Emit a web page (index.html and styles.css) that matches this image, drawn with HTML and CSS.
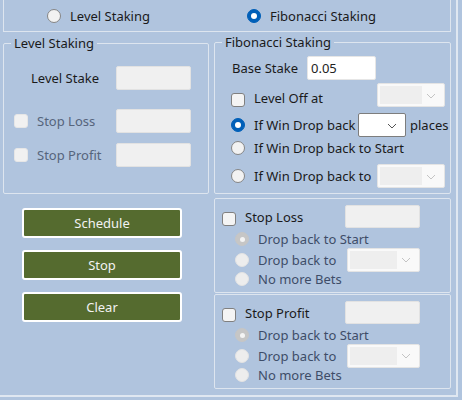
FILE: index.html
```html
<!DOCTYPE html>
<html lang="en">
<head>
<meta charset="utf-8">
<title>Staking</title>
<link rel="stylesheet" href="styles.css">
</head>
<body>
<div class="frame">
  <div class="mode">
    <label class="opt opt-level"><span class="radio"></span><span class="txt">Level Staking</span></label>
    <label class="opt"><span class="radio on"></span><span class="txt">Fibonacci Staking</span></label>
  </div>

  <div class="panels">
    <div class="col-left">
      <fieldset class="group level">
        <legend>Level Staking</legend>
        <div class="lrow lr1">
          <span class="lbl stake-lbl">Level Stake</span>
          <span class="tb"></span>
        </div>
        <div class="lrow lr2">
          <span class="chk dis"></span>
          <span class="lbl dim">Stop Loss</span>
          <span class="tb"></span>
        </div>
        <div class="lrow lr3">
          <span class="chk dis"></span>
          <span class="lbl dim">Stop Profit</span>
          <span class="tb"></span>
        </div>
      </fieldset>
      <div class="buttons">
        <button class="btn" type="button">Schedule</button>
        <button class="btn" type="button">Stop</button>
        <button class="btn" type="button">Clear</button>
      </div>
    </div>

    <div class="col-right">
      <fieldset class="group fib">
        <legend>Fibonacci Staking</legend>
        <div class="frow fa">
          <span class="lbl base-lbl">Base Stake</span>
          <span class="tb white">0.05</span>
        </div>
        <div class="frow fb">
          <span class="chk"></span>
          <span class="lbl">Level Off at</span>
          <span class="combo dis end"><span class="field"></span><svg class="chev" width="10" height="6" viewBox="0 0 10 6"><path d="M1 1L5 5L9 1" fill="none" stroke="#c4c4c4" stroke-width="1"/></svg></span>
        </div>
        <div class="frow fc">
          <span class="radio on"></span>
          <span class="lbl wide">If Win Drop back</span>
          <span class="combo small"><span class="field"></span><svg class="chev" width="10" height="6" viewBox="0 0 10 6"><path d="M1 1L5 5L9 1" fill="none" stroke="#555" stroke-width="1"/></svg></span>
          <span class="lbl places">places</span>
        </div>
        <div class="frow fd">
          <span class="radio"></span>
          <span class="lbl">If Win Drop back to Start</span>
        </div>
        <div class="frow fe">
          <span class="radio"></span>
          <span class="lbl">If Win Drop back to</span>
          <span class="combo dis end"><span class="field"></span><svg class="chev" width="10" height="6" viewBox="0 0 10 6"><path d="M1 1L5 5L9 1" fill="none" stroke="#c4c4c4" stroke-width="1"/></svg></span>
        </div>
      </fieldset>

      <div class="box">
        <div class="srow s1">
          <span class="chk"></span>
          <span class="lbl stop-lbl">Stop Loss</span>
          <span class="tb"></span>
        </div>
        <div class="srow s2">
          <span class="radio dis on"></span>
          <span class="lbl soft">Drop back to Start</span>
        </div>
        <div class="srow s3">
          <span class="radio dis"></span>
          <span class="lbl soft drop-lbl">Drop back to</span>
          <span class="combo dis"><span class="field"></span><svg class="chev" width="10" height="6" viewBox="0 0 10 6"><path d="M1 1L5 5L9 1" fill="none" stroke="#c4c4c4" stroke-width="1"/></svg></span>
        </div>
        <div class="srow s4">
          <span class="radio dis"></span>
          <span class="lbl soft">No more Bets</span>
        </div>
      </div>

      <div class="box">
        <div class="srow s1">
          <span class="chk"></span>
          <span class="lbl stop-lbl">Stop Profit</span>
          <span class="tb"></span>
        </div>
        <div class="srow s2">
          <span class="radio dis on"></span>
          <span class="lbl soft">Drop back to Start</span>
        </div>
        <div class="srow s3">
          <span class="radio dis"></span>
          <span class="lbl soft drop-lbl">Drop back to</span>
          <span class="combo dis"><span class="field"></span><svg class="chev" width="10" height="6" viewBox="0 0 10 6"><path d="M1 1L5 5L9 1" fill="none" stroke="#c4c4c4" stroke-width="1"/></svg></span>
        </div>
        <div class="srow s4">
          <span class="radio dis"></span>
          <span class="lbl soft">No more Bets</span>
        </div>
      </div>
    </div>
  </div>
</div>
</body>
</html>
```

FILE: styles.css
```css
* { box-sizing: border-box; }

html, body {
  margin: 0;
  padding: 0;
  background: #b0c4de;
  overflow: hidden;
}

body {
  font-family: "Noto Sans", "Open Sans", sans-serif;
  font-size: 13px;
  color: #1a1a1a;
  line-height: 16px;
}

.frame {
  width: 458px;
  height: 398px;
  padding-left: 3px;
  border-right: 2px solid #dfe7f1;
  border-bottom: 2px solid #dfe7f1;
}

/* top mode selector */
.mode {
  width: 448px;
  height: 33px;
  margin-top: -1px;
  border: 1px solid #dde5ef;
  display: flex;
  align-items: center;
  padding-left: 43px;
}

.opt {
  display: flex;
  align-items: center;
}

.opt-level { width: 200px; }

.opt .txt { margin-left: 9px; }

/* controls */
.radio {
  flex: none;
  width: 14px;
  height: 14px;
  border-radius: 50%;
  border: 1px solid #858585;
  background: #f2f2f2;
  display: inline-flex;
  align-items: center;
  justify-content: center;
}

.radio.on {
  background: #005fb8;
  border-color: #005fb8;
}

.radio.on::after {
  content: "";
  width: 6px;
  height: 6px;
  border-radius: 50%;
  background: #fff;
}

.radio.dis {
  background: #ededed;
  border-color: #e3e3e3;
}

.radio.dis.on {
  background: #c6c6c6;
  border-color: #c6c6c6;
}

.radio.dis.on::after {
  width: 5px;
  height: 5px;
  background: #f4f4f4;
}

.chk {
  flex: none;
  width: 14px;
  height: 14px;
  border-radius: 3px;
  border: 1px solid #808080;
  background: #f4f4f4;
}

.chk.dis {
  border-color: #e6e6e6;
  background: #f1f1f1;
}

.tb {
  flex: none;
  width: 75px;
  height: 24px;
  background: #f0f0f0;
  border: 1px solid #e2e2e2;
  border-radius: 2px;
}

.tb.white {
  width: 69px;
  background: #ffffff;
  border-color: #e6e6e6;
  padding: 3px 0 0 3px;
  color: #222;
}

.combo {
  flex: none;
  display: flex;
  align-items: center;
  height: 24px;
  width: 48px;
  background: #ffffff;
  border: 1px solid #7d7d7d;
  border-radius: 2px;
  padding: 2px;
}

.combo .field {
  flex: 1;
  align-self: stretch;
}

.combo .chev {
  flex: none;
  margin: 1px 6px 0 4px;
}

.combo.dis {
  width: 73px;
  background: #f9f9f9;
  border-color: #e4e4e4;
}

.combo.dis .field {
  background: #eeeeee;
}

.combo.end {
  width: 68px;
  margin-left: auto;
  margin-right: 5px;
}

.lbl { white-space: nowrap; }
.dim { color: #56657c; }
.soft { color: #3e4d68; }

/* panels */
.panels {
  display: flex;
  gap: 5px;
  margin-top: 2px;
}

.col-left {
  width: 206px;
  padding-top: 1px;
}

.col-right {
  width: 237px;
}

.group {
  margin: 0;
  padding: 0;
  border: 1px solid #dde5ef;
  border-radius: 2px;
  min-width: 0;
}

.group legend {
  padding: 0 3px 0 3px;
  margin-left: 7px;
  line-height: 16px;
  color: #1a1a1a;
}

.level { height: 159px; }
.fib { height: 160px; }

/* level staking rows */
.lrow {
  display: flex;
  align-items: center;
  height: 24px;
}

.lrow .tb { margin-left: auto; margin-right: 17px; }

.lr1 { margin-top: 15px; }
.lr2 { margin-top: 19px; }
.lr3 { margin-top: 10px; }

.stake-lbl {
  width: 95px;
  text-align: right;
}

.lr2 .chk, .lr3 .chk { margin-left: 10px; }
.lr2 .lbl, .lr3 .lbl { margin-left: 9px; }

/* buttons */
.buttons {
  display: flex;
  flex-direction: column;
  gap: 12px;
  margin-top: 14px;
  padding-left: 19px;
}

.btn {
  width: 160px;
  height: 30px;
  margin: 0;
  padding: 0;
  background: #556b2f;
  color: #f2f2f2;
  border: 2px solid #ffffff;
  border-radius: 3px;
  font-family: "Noto Sans", "Open Sans", sans-serif;
  font-size: 13px;
}

/* fibonacci rows */
.frow {
  display: flex;
  align-items: center;
  padding-left: 16px;
}

.fa { margin-top: 6px; height: 24px; }
.base-lbl { width: 76px; padding-left: 1px; }

.fb { margin-top: 3px; height: 24px; align-items: flex-start; }
.fb .chk { margin-top: 10px; }
.fb .lbl { margin-top: 7px; margin-left: 9px; }

.fc { margin-top: 6px; height: 24px; }
.fc .lbl.wide { width: 104px; margin-left: 9px; }
.places { margin-left: 4px; }

.fd { height: 22px; }
.fd .lbl { margin-left: 9px; }

.fe { margin-top: 5px; height: 24px; }
.fe .lbl { margin-left: 9px; }

/* stop boxes */
.box {
  height: 95px;
  border: 1px solid #dde5ef;
  border-radius: 2px;
  margin-top: 4px;
  padding-left: 20px;
}

.box + .box { margin-top: 1px; }

.srow {
  display: flex;
  align-items: center;
}

.s1 {
  margin-top: 6px;
  height: 23px;
  align-items: flex-start;
  margin-left: -13px;
}

.s1 .chk { margin-top: 7px; }
.s1 .stop-lbl { width: 100px; margin-left: 9px; margin-top: 4px; }
.s1 .tb { height: 23px; }

.s2 { height: 20px; margin-top: 1px; }
.s3 { height: 21px; }
.s4 { height: 18px; }

.srow .soft { margin-left: 9px; }
.drop-lbl { width: 89px; }
```
